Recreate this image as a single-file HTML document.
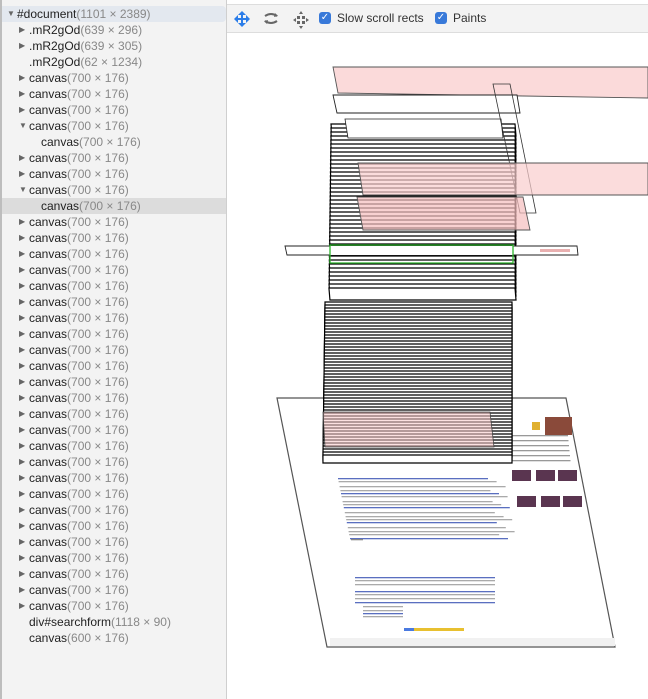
<!DOCTYPE html>
<html><head><meta charset="utf-8"><style>
html,body{margin:0;padding:0;width:648px;height:699px;overflow:hidden;background:#fff;font-family:"Liberation Sans",Arial,sans-serif;}
#left{position:absolute;left:0;top:0;width:226px;height:699px;background:#f3f3f3;border-right:1px solid #cfcfcf;}
#left:before{content:"";position:absolute;left:0;top:0;width:2px;height:699px;background:#bdbdbd;}
.row{position:absolute;left:2px;width:224px;height:16px;line-height:16px;font-size:12px;color:#222;white-space:nowrap;}
.row span{color:#888;}
.row i{font-style:normal;font-size:8px;color:#666;position:absolute;top:0;}
#tb{position:absolute;left:227px;top:4px;width:421px;height:27px;border-top:1px solid #ddd;border-bottom:1px solid #ddd;background:#f3f3f3;font-size:12px;color:#333;}
.cb{position:absolute;top:7px;width:12px;height:12px;border-radius:3px;background:#3879d9;color:#fff;font-size:10px;line-height:12px;text-align:center;}
</style></head><body>
<div id="left"></div>
<div id="tree"></div>
<div id="tb">
<svg width="100" height="27" style="position:absolute;left:0;top:0">
<g fill="#2b7de9"><path d="M15 6 l4 4 h-3 v3 h3 v-3 l4 4 -4 4 v-3 h-3 v3 h3 l-4 4 -4-4 h3 v-3 h-3 v3 l-4-4 4-4 v3 h3 v-3 h-3z"/></g>
<g fill="none" stroke="#666" stroke-width="2"><path d="M38 11 q6-4 12 0 M50 16 q-6 4 -12 0"/></g>
<path d="M48 8 l3 3 -4 1z M40 19 l-3-3 4-1z" fill="#666"/>
<g fill="#666"><rect x="70" y="11" width="3" height="3"/><rect x="70" y="16" width="3" height="3"/><rect x="75" y="11" width="3" height="3"/><rect x="75" y="16" width="3" height="3"/><path d="M74 6 l2 3 h-4z M74 24 l2-3 h-4z M66 15 l3-2 v4z M82 15 l-3-2 v4z"/></g>
</svg>
<div class="cb" style="left:92px">✓</div>
<div style="position:absolute;left:110px;top:6px">Slow scroll rects</div>
<div class="cb" style="left:208px">✓</div>
<div style="position:absolute;left:226px;top:6px">Paints</div>
</div>
<svg id="sv" width="648" height="699" style="position:absolute;left:0;top:0"></svg>
<script>
var rows=[[0,'▼','#document','1101 × 2389'],[1,'▶','.mR2gOd','639 × 296'],[1,'▶','.mR2gOd','639 × 305'],[1,'','.mR2gOd','62 × 1234'],[1,'▶','canvas','700 × 176'],[1,'▶','canvas','700 × 176'],[1,'▶','canvas','700 × 176'],[1,'▼','canvas','700 × 176'],[2,'','canvas','700 × 176'],[1,'▶','canvas','700 × 176'],[1,'▶','canvas','700 × 176'],[1,'▼','canvas','700 × 176'],[2,'','canvas','700 × 176']];
for(var k=0;k<25;k++)rows.push([1,'▶','canvas','700 × 176']);
rows.push([1,'','div#searchform','1118 × 90']);rows.push([1,'','canvas','600 × 176']);
var h='';
rows.forEach(function(r,i){var y=6+16*i;var bg=i==0?'background:#e3e8ef;border-radius:0 4px 4px 0;':(i==12?'background:#dcdcdc;':'');
var tx=r[0]==0?17:(r[0]==1?29:41);var ax=tx-10;
h+='<div class="row" style="top:'+y+'px;'+bg+'">'+(r[1]?'<i style="left:'+(ax-2)+'px">'+r[1]+'</i>':'')+'<div style="position:absolute;left:'+(tx-2)+'px">'+r[2]+'<span>('+r[3]+')</span></div></div>';});
document.getElementById('tree').innerHTML=h;
var s='';
function P(pts,fill,st,sw){s+='<polygon points="'+pts+'" fill="'+fill+'" stroke="'+(st||'#222')+'" stroke-width="'+(sw||1)+'"/>';}
// page
P('277,398 566,398 615,647 327,647','#fff','#555',1.2);
var g='';
function L(x,y,w,c){g+='<rect x="'+x+'" y="'+y+'" width="'+w+'" height="1.3" fill="'+c+'"/>';}
var ys=[478,481,486,490,493,496,501,504,507,512,516,519,522,527,531,534,538];
ys.forEach(function(y,i){var x=338+(y-478)*0.2;L(x,y,150+(i%3)*8,i%4==0?'#5a6fc0':'#aaa');});
L(351,539,12,'#888');
[577,580,584,591,594,598,602,606,610,613,616].forEach(function(y,i){L(355+(i>6?8:0),y,i>6?40:140,i%3==0?'#5a6fc0':'#aaa');});
g+='<rect x="404" y="628" width="60" height="3" fill="#e8c030"/><rect x="404" y="628" width="10" height="3" fill="#4a7ae0"/>';
g+='<rect x="330" y="638" width="285" height="8" fill="#f1f1f1"/>';
g+='<rect x="545" y="417" width="27" height="18" fill="#8a4a3a"/><rect x="532" y="422" width="8" height="8" fill="#e0b030"/>';
[[512,470],[536,470],[558,470],[517,496],[541,496],[563,496]].forEach(function(p){g+='<rect x="'+p[0]+'" y="'+p[1]+'" width="19" height="11" fill="#5a3550"/>';});
[435,440,445,450,455,460].forEach(function(y){L(508+(y-435)*0.1,y,60,'#999');});
s+=g;
// lower stack
for(var i=0;i<52;i++){var y=302+i*3;P((325-i*0.04)+','+y+' 512,'+y+' 512,'+(y+8)+' '+(325-i*0.04)+','+(y+8),'#fff','#000',1.2);}
P('323,412 490,412 494,447 325,447','rgba(250,200,200,0.55)','#444',0.8);
// upper stack
for(var i=0;i<42;i++){var y=124+i*4;var xl=331-i*0.05;P(xl+','+y+' 515,'+y+' 516,'+(y+12)+' '+(xl+1)+','+(y+12),'#fff','#000',1.2);}
P('345,119 501,119 503,138 348,138','#fff','#222',0.8);
// search bar
P('285,246 577,246 578,255 287,255','#fff','#222',0.9);
s+='<rect x="330" y="246" width="183" height="9" fill="#fff"/>';
P('330,245 513,245 513,263 330,263','none','#2db52d',1.3);
s+='<rect x="540" y="249" width="30" height="3" fill="#e9b0b0"/>';
// pinks
P('333,67 648,67 648,98 338,93','rgba(250,205,205,0.75)','#555',0.9);
P('333,95 517,95 520,113 337,113','#fff','#222',0.9);
P('493,84 510,84 536,213 520,213','none','#333',0.8);
P('358,163 648,163 648,195 363,195','rgba(250,205,205,0.7)','#555',0.9);
P('357,197 523,197 530,230 363,230','rgba(245,190,190,0.7)','#555',0.9);
document.getElementById('sv').innerHTML=s;
</script>
</body></html>
